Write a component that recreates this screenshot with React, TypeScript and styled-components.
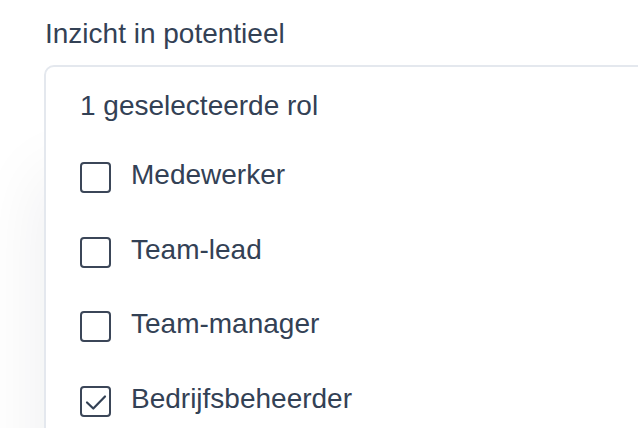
import * as React from 'react';
import styled, { createGlobalStyle } from 'styled-components';
import { FunctionComponent } from 'react';

const GlobalStyle = createGlobalStyle`
	html, body {
		margin: 0;
		padding: 0;
		background: #ffffff;
		overflow: hidden;
	}
	body {
		font-family: 'Liberation Sans', Arial, Helvetica, sans-serif;
		color: #334155;
	}
`;

type Role = {
	name: string;
	checked: boolean;
};

const roles: Role[] = [
	{ name: 'Medewerker', checked: false },
	{ name: 'Team-lead', checked: false },
	{ name: 'Team-manager', checked: false },
	{ name: 'Bedrijfsbeheerder', checked: true },
];

const App: FunctionComponent = () => {
	const selected = roles.filter((r) => r.checked).length;

	return (
		<Wrap>
			<GlobalStyle />
			<Title>Inzicht in potentieel</Title>
			<Card>
				<Summary>{selected} geselecteerde rol</Summary>
				<List>
					{roles.map((role) => (
						<Row key={role.name}>
							<Box checked={role.checked}>
								{role.checked && (
									<svg width="27" height="27" viewBox="2 2 27 27" fill="none">
										<polyline
											points="7,16.5 13.3,22.5 25,10.5"
											stroke="#334155"
											strokeWidth="2.2"
											strokeLinecap="round"
											strokeLinejoin="round"
										/>
									</svg>
								)}
							</Box>
							<Label>{role.name}</Label>
						</Row>
					))}
				</List>
			</Card>
		</Wrap>
	);
};

export default App;

const Wrap = styled.div`
	width: 638px;
	height: 428px;
	overflow: hidden;
	padding: 14px 0 0 44px;
	box-sizing: border-box;
`;

const Title = styled.div`
	font-size: 28px;
	line-height: 40px;
	padding-left: 1px;
	color: #334155;
`;

const Card = styled.div`
	margin-top: 11px;
	width: 700px;
	height: 420px;
	border: 2px solid #e4e8ee;
	border-radius: 10px;
	background: #ffffff;
	box-shadow: -4px 110px 70px rgba(15, 23, 42, 0.07);
	padding: 19px 0 0 34px;
	box-sizing: border-box;
`;

const Summary = styled.div`
	font-size: 28px;
	line-height: 40px;
`;

const List = styled.div`
	margin-top: 29px;
	display: flex;
	flex-direction: column;
	gap: 34.5px;
`;

const Row = styled.div`
	display: flex;
	align-items: center;
	height: 40px;
	gap: 20px;
`;

const Box = styled.div<{ checked: boolean }>`
	width: 31px;
	height: 31px;
	margin-top: 5px;
	box-sizing: border-box;
	border: 2px solid #3b4658;
	border-radius: 4px;
	display: flex;
	align-items: center;
	justify-content: center;
	flex-shrink: 0;
	background: #ffffff;
`;

const Label = styled.div`
	font-size: 28px;
	line-height: 40px;
	white-space: nowrap;
`;
